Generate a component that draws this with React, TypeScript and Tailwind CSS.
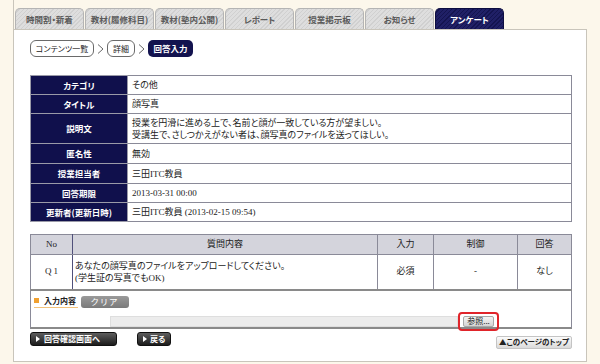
import React from "react";

const tabs = ["時間割・新着", "教材(履修科目)", "教材(塾内公開)", "レポート", "授業掲示板", "お知らせ", "アンケート"];

function Chevron() {
  return (
    <svg width="7" height="10" viewBox="0 0 7 10" className="mx-[3px]">
      <path d="M1 0.5 L6 5 L1 9.5" fill="none" stroke="#666" strokeWidth="1" />
    </svg>
  );
}

function Tri() {
  return (
    <svg width="4" height="6" viewBox="0 0 4 6">
      <path d="M0 0 L4 3 L0 6 Z" fill="#fff" />
    </svg>
  );
}

const rows: { label: string; value: React.ReactNode; h: string }[] = [
  { label: "カテゴリ", value: "その他", h: "h-[19px]" },
  { label: "タイトル", value: "顔写真", h: "h-[19px]" },
  {
    label: "説明文",
    value: (
      <>
        授業を円滑に進める上で、名前と顔が一致している方が望ましい。
        <br />
        受講生で、さしつかえがない者は、顔写真のファイルを送ってほしい。
      </>
    ),
    h: "h-[30px]",
  },
  { label: "匿名性", value: "無効", h: "h-[20px]" },
  { label: "授業担当者", value: "三田ITC教員", h: "h-[20px]" },
  { label: "回答期限", value: "2013-03-31 00:00", h: "h-[19px]" },
  { label: "更新者(更新日時)", value: "三田ITC教員 (2013-02-15 09:54)", h: "h-[19px]" },
];

export default function App() {
  return (
    <div className="w-[600px] h-[364px] bg-[#fcf7eb] pl-[13px] overflow-hidden font-['Noto_Sans_CJK_JP',sans-serif] [font-feature-settings:'palt']">
      <div className="w-[574px] h-[362px] border-l border-[#c9c5bb] flex flex-col">
        {/* Tabs */}
        <div className="h-[29px] pt-[8px] pl-[1px] flex gap-[1px]">
          {tabs.map((t, i) =>
            i === tabs.length - 1 ? (
              <div
                key={t}
                className="w-[69px] rounded-t-[5px] border border-b-0 border-[#0d0d40] flex items-center justify-center text-[8.5px] font-bold text-white bg-[repeating-linear-gradient(135deg,#202066_0px,#202066_2px,#141450_2px,#141450_3px)]"
              >
                {t}
              </div>
            ) : (
              <div
                key={t}
                className="w-[69px] rounded-t-[5px] border border-b-0 border-[#b4b4b4] flex items-center justify-center text-[8.5px] font-bold text-[#5a5a5a] bg-[repeating-linear-gradient(135deg,#dedede_0px,#dedede_2px,#d0d0d0_2px,#d0d0d0_3px)]"
              >
                {t}
              </div>
            )
          )}
        </div>

        {/* Panel */}
        <div className="flex-1 bg-white border-t border-r border-b border-[#c9c5bb] pl-[16px] pr-[14px] pt-[10px] flex flex-col">
          {/* Breadcrumb */}
          <div className="flex items-center h-[17px]">
            <div className="w-[64px] h-[17px] border-[1.5px] border-[#6a6a6a] rounded-[6px] flex items-center justify-center text-[8px] text-[#222]">
              コンテンツ一覧
            </div>
            <Chevron />
            <div className="w-[28px] h-[17px] border-[1.5px] border-[#6a6a6a] rounded-[6px] flex items-center justify-center text-[8px] text-[#222]">
              詳細
            </div>
            <Chevron />
            <div className="w-[45px] h-[17px] rounded-[5px] bg-[#13134f] flex items-center justify-center text-[8.5px] font-bold text-white">
              回答入力
            </div>
          </div>

          {/* Table 1 */}
          <table className="mt-[18px] w-[542px] border-collapse border border-[#8a8a98]">
            <tbody>
              {rows.map((r) => (
                <tr key={r.label} className={r.h}>
                  <td className="w-[97px] bg-[#10104c] text-white text-[8.5px] font-bold text-center border border-[#9a9aa8] p-0">
                    {r.label}
                  </td>
                  <td className="pl-[4px] text-[9px] leading-[12px] text-[#222] border border-[#8a8a98] font-['Liberation_Serif','Noto_Sans_CJK_JP',serif]">
                    {r.value}
                  </td>
                </tr>
              ))}
            </tbody>
          </table>

          {/* Table 2 */}
          <table className="mt-[12px] w-[542px] border-collapse border border-[#8a8a98] border-b-2 border-b-[#8a8a8a] text-[9px] text-[#222] font-['Liberation_Serif','Noto_Sans_CJK_JP',serif]">
            <thead>
              <tr className="h-[20px] bg-[#d4d4dc]">
                <th className="w-[42px] font-normal border border-[#8a8a98] border-r-[#50507a]">No</th>
                <th className="w-[305px] font-normal border border-[#8a8a98]">質問内容</th>
                <th className="w-[56px] font-normal border border-[#8a8a98]">入力</th>
                <th className="w-[84px] font-normal border border-[#8a8a98]">制御</th>
                <th className="font-normal border border-[#8a8a98]">回答</th>
              </tr>
            </thead>
            <tbody>
              <tr className="h-[35px]">
                <td className="text-center border border-[#8a8a98] border-r-[#50507a]">Q 1</td>
                <td className="pl-[2px] leading-[12px] border border-[#8a8a98]">
                  あなたの顔写真のファイルをアップロードしてください。
                  <br />
                  (学生証の写真でもOK)
                </td>
                <td className="text-center border border-[#8a8a98]">必須</td>
                <td className="text-center border border-[#8a8a98]">-</td>
                <td className="text-center border border-[#8a8a98]">なし</td>
              </tr>
            </tbody>
          </table>

          {/* Input area */}
          <div className="w-[542px] h-[38px] border-l border-r border-[#8a8a98] border-b-2 border-b-[#8a8a8a] flex flex-col">
            <div className="flex items-center mt-[5px] h-[12px]">
              <div className="ml-[3px] flex items-center gap-[5px] pb-[1px] border-b border-[#f3c27a] pr-[2px]">
                <div className="w-[5px] h-[5px] bg-[#f0a030]" />
                <span className="text-[8px] font-bold text-[#222] leading-[10px]">入力内容</span>
              </div>
              <div className="ml-[3px] w-[48px] h-[12px] rounded-[3px] bg-[linear-gradient(#9a9a9a,#7a7a7a)] flex items-center justify-center text-[8.5px] text-white tracking-[2px]">
                クリア
              </div>
            </div>
            <div className="flex items-center mt-[4px]">
              <div className="ml-[79px] w-[348px] h-[11px] bg-[#ececec] border border-[#dedede]" />
              <div className="ml-[0px] w-[41px] h-[19px] border-2 border-[#e0242a] rounded-[4px] flex items-center justify-center">
                <div className="w-[31px] h-[11px] bg-[linear-gradient(#f4f4f4,#d4d4d4)] border border-[#a8a8a8] rounded-[2px] flex items-center justify-center text-[8px] text-[#222] leading-none">
                  参照...
                </div>
              </div>
            </div>
          </div>

          {/* Buttons */}
          <div className="flex items-start mt-[3px] w-[542px]">
            <div className="w-[87px] h-[14px] rounded-[3px] bg-[linear-gradient(#5e5e5e,#1c1c1c)] border border-[#111] flex items-center pl-[5px] gap-[4px] text-[8px] font-bold text-white">
              <Tri />
              回答確認画面へ
            </div>
            <div className="ml-[20px] w-[34px] h-[14px] rounded-[3px] bg-[linear-gradient(#5e5e5e,#1c1c1c)] border border-[#111] flex items-center pl-[5px] gap-[3px] text-[8px] font-bold text-white">
              <Tri />
              戻る
            </div>
            <div className="ml-auto mt-[4px] w-[76px] h-[13px] rounded-[2px] bg-[linear-gradient(#fbfbfb,#dadada)] border border-[#c4c4c4] flex items-center justify-center text-[7.5px] font-bold text-[#222]">
              ▲このページのトップ
            </div>
          </div>
        </div>
      </div>
    </div>
  );
}
